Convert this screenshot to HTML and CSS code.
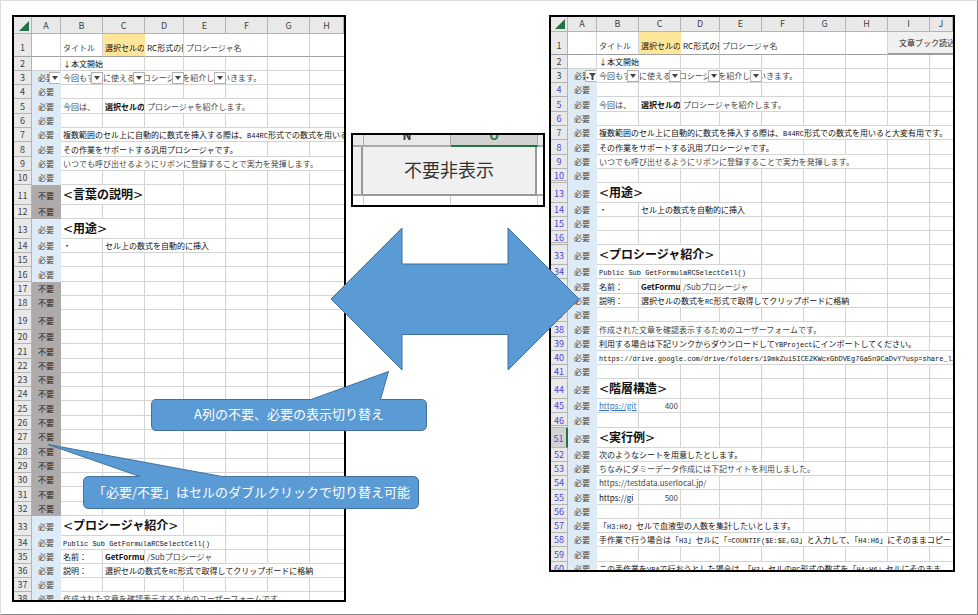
FILE: index.html
```html
<!DOCTYPE html>
<html lang="ja">
<head>
<meta charset="utf-8">
<title>不要非表示</title>
<link rel="stylesheet" href="styles.css">
</head>
<body>
<main class="slide">
  <section class="panel"><table class="sheet" id="sheet-all"></table></section>
  <section class="closeup">
    <div class="closeup-head"><span></span><span>N</span><span class="selected">O</span><span></span></div>
    <div class="closeup-body"><span class="stub"></span><button type="button">不要非表示</button><span></span></div>
    <div class="closeup-foot"><span></span><span></span><span></span><span></span></div>
  </section>
  <section class="panel"><table class="sheet filtered" id="sheet-filtered"></table></section>

  <svg class="shapes" width="978" height="615" viewBox="0 0 978 615" aria-hidden="true">
    <g fill="#5b9bd5" stroke="#41719c" stroke-width="1">
      <path d="M331 299 402 228V264H508V228L579 299 508 370V334.500H402V370Z"/>
      <path d="M156 399.500H311L388.500 371.500 380.500 399.500H421Q426.500 399.500 426.500 405V425Q426.500 430.500 421 430.500H156Q151.500 430.500 151.500 425V405Q151.500 399.500 156 399.500Z"/>
      <path d="M89 476.500H140L48 444.500 222 476.500H413Q418.500 476.500 418.500 482V503Q418.500 508.500 413 508.500H89Q83.500 508.500 83.500 503V482Q83.500 476.500 89 476.500Z"/>
    </g>
  </svg>
  <p class="callout callout-column">A列の不要、必要の表示切り替え</p>
  <p class="callout callout-toggle">「必要/不要」はセルのダブルクリックで切り替え可能</p>
</main>
<script src="sheets.js"></script>
</body>
</html>
```
FILE: styles.css
```css
* { box-sizing: border-box; }

body {
  margin: 0;
  background: #fff;
  font-family: "Noto Sans CJK JP", "Liberation Sans", sans-serif;
}

.slide {
  position: relative;
  display: grid;
  grid-template-columns: 334fr 195fr 406fr;
  column-gap: 4px;
  align-items: start;
  min-height: 100vh;
  padding: 14px 22px 12px 11px;
  border: 1px solid #ddd;
  border-right-color: #888;
  border-bottom: 2px solid #888;
}

.panel {
  min-width: 0;
  overflow: hidden;
  border: 2px solid #000;
}

/* Worksheet grid */
.sheet {
  width: 100%;
  table-layout: fixed;
  border-spacing: 0;
  font-size: 8px;
  line-height: 13px;
  color: #444;
}

.col-num { width: 18px; }
.filtered .col-num { width: 17px; }
.col-flag { width: 29px; }
.col-wide { width: 42px; }
.col-narrow { width: 39px; }

.sheet th,
.sheet td {
  padding: 0;
  border: 0 solid #d4d4d4;
  border-right-width: 1px;
  border-bottom-width: 1px;
  font-weight: 400;
  text-align: left;
  white-space: nowrap;
}

.sheet td:last-child { border-right-width: 0; }

.cell {
  height: 13px;
  padding-left: 2px;
  overflow: hidden;
}

.long .cell { height: 14px; padding-top: 1px; }
.tall .cell { height: 19px; padding-top: 4px; }
.title .cell { height: 22px; padding-top: 7px; }
.cut .cell { height: 8px; }
.cut td, .cut th { border-bottom-width: 0; }

.sheet th {
  background: #e9e9e9;
  border-color: #b4b4b4;
  font-size: 9px;
  text-align: center;
}

.sheet th .cell { padding-left: 0; }

.head .cell { height: 16px; line-height: 17px; }
.filtered .head .cell { height: 14px; line-height: 14px; }
.title th, .title td { border-bottom-color: #a0a0a0; }

.sheet .corner .cell { display: flex; justify-content: flex-end; align-items: flex-end; padding: 0 2px 2px 0; }
.corner svg { display: block; fill: #217346; }

.sheet .num-filtered { color: #4a48dc; }
.sheet .gap { border-bottom: 3px double #b4b4b4; }
.gap .cell { height: 11px; }
.long .gap .cell { height: 12px; }
.sheet .active { background: #d2d2d2; border-right: 2px solid #217346; }

.sheet .flag { text-align: center; }
.flag .cell { padding-left: 0; }
.sheet .on { background: #ddebf7; border-color: #ddebf7; }
.sheet .off { background: #aeaaaa; border-color: #aeaaaa; color: #222; }

.sheet .fill { background: #ffe699; border-right-color: #ffe699; }
.dark { color: #111; }
.sheet .bold { color: #111; font-weight: 700; }
.sheet .number { text-align: right; }
.number .cell { padding-right: 2px; }
.tall .heading .cell { padding-top: 0; line-height: 18px; font-size: 12px; font-weight: 700; color: #111; }
.heading span { font-family: "DejaVu Sans", sans-serif; font-weight: 400; }
.sheet code { font-family: "Liberation Mono", monospace; font-size: 7px; }
.sheet a { color: #2e75b6; }

/* Filter buttons lie over the text of their row */
.filter-row .cell { position: relative; }
.filters {
  position: absolute;
  inset: 0 auto 0 0;
  display: grid;
  grid-template-columns: 42px 42px 39px 42px;
  justify-items: end;
}
.flag .filters { grid-template-columns: 29px; }
.filters button {
  display: grid;
  place-items: center;
  width: 12px;
  height: 12px;
  margin: 1px 0 0;
  padding: 0;
  background: #fff;
  border: 1px solid #b0b0b0;
}
.filters svg { display: block; fill: #444; }

.title .command { vertical-align: top; }
.title .command .cell { padding: 0; }
.command button {
  width: 100%;
  height: 22px;
  padding: 0 0 0 11px;
  overflow: hidden;
  background: #f0f0f0;
  border: 0;
  border-bottom: 1px solid #999;
  color: #222;
  font: inherit;
  text-align: left;
  white-space: nowrap;
}

/* Enlarged toggle button */
.closeup {
  margin: 118px 0 0 1px;
  overflow: hidden;
  border: 2px solid #000;
}
.closeup > div { display: grid; grid-template-columns: 11px 88fr 88fr 5px; }
.closeup > .closeup-body { grid-template-columns: 10px 1fr 6px; }
.closeup-head span {
  height: 12px;
  overflow: hidden;
  background: #e9e9e9;
  border-right: 1px solid #aaa;
  border-bottom: 2px solid #aaa;
  color: #333;
  font-size: 12px;
  font-weight: 700;
  line-height: 0;
  text-align: center;
}
.closeup-head .selected { background: #d2d2d2; border-bottom-color: #217346; color: #217346; }
.closeup-body span { border-bottom: 2px solid #aaa; }
.closeup-body .stub { background: #f0f0f0; border-right: 2px solid #999; }
.closeup-body button {
  height: 49px;
  padding: 0 0 4px;
  background: #f0f0f0;
  border: 0;
  border-right: 2px solid #999;
  border-bottom: 2px solid #999;
  color: #333;
  font: inherit;
  font-size: 18px;
}
.closeup-foot span { height: 9px; border-right: 1px solid #ccc; }
.closeup span:last-child { border-right: 0; }

/* Drawn shapes and their captions, placed freely over the slide */
.shapes { position: absolute; top: -1px; left: -1px; pointer-events: none; }
.callout {
  position: absolute;
  margin: 0;
  color: #fff;
  font-size: 13px;
  line-height: 32px;
  text-align: center;
  white-space: nowrap;
}
.callout-column { top: 397px; left: 150px; width: 276px; }
.callout-toggle { top: 475px; left: 83px; width: 335px; }
```
FILE: sheets.js
```js
const heading = (text, span) => [`<span>&lt;</span>${text}<span>&gt;</span>`, span, "heading"];

const arrow = '<button type="button" aria-label="フィルター"><svg width="6" height="4"><path d="M0 0H6L3 4Z"/></svg></button>';
const funnel = '<button type="button" aria-label="フィルター適用中"><svg width="10" height="8"><path d="M3 1H10L7.500 4V8H5.500V4ZM0 5H3L1.500 7Z"/></svg></button>';
const filters = `<span class="filters">${arrow.repeat(4)}</span>`;

const title = [["タイトル"], ["選択セルの", 1, "fill dark"], ["RC形式の数", 1, "dark"], ["プロシージャ名", 2]];
const intro = [
  [2, "", "", [["↓本文開始", 2, "dark"]]],
  [3, "on", "filter-row", [["今回もすぐに使えるプロシージャを紹介していきます。" + filters, 5]]],
  [4, "on", "", []],
  [5, "on", "long", [["今回は、"], ["選択セルの", 1, "bold"], ["プロシージャを紹介します。", 3]]],
  [6, "on", "", []],
  [7, "on", "", [["複数範囲のセル上に自動的に数式を挿入する際は、<code>B44RC</code>形式での数式を用いると大変有用です。", 9, "dark"]]],
  [8, "on", "long", [["その作業をサポートする汎用プロシージャです。", 5, "dark"]]],
  [9, "on", "", [["いつでも呼び出せるようにリボンに登録することで実力を発揮します。", 7]]]
];
const usage = [["・", 1, "dark"], ["セル上の数式を自動的に挿入", 3, "dark"]];
const declaration = [["<code>Public Sub GetFormulaRCSelectCell()</code>", 4, "dark"]];
const procName = [["名前：", 1, "dark"], ["GetFormu", 1, "bold"], ["/Subプロシージャ", 2]];
const procNote = [["説明：", 1, "dark"], ["選択セルの数式を<code>RC</code>形式で取得してクリップボードに格納", 6, "dark"]];
const formNote = [["作成された文章を確認表示するためのユーザーフォームです。", 6]];

const hiddenRows = [];
for (let n = 17; n <= 32; n++) {
  const size = n === 19 ? "tall" : [21, 25, 28, 31].includes(n) ? "long" : "";
  hiddenRows.push([n, "off", size, []]);
}

const allRows = [
  [1, "", "title", title],
  ...intro,
  [10, "on", "", []],
  [11, "off", "tall", [heading("言葉の説明", 2)]],
  [12, "off", "", []],
  [13, "on", "tall", [heading("用途", 2)]],
  [14, "on", "", usage],
  [15, "on", "", []],
  [16, "on", "long", []],
  ...hiddenRows,
  [33, "on", "tall", [heading("プロシージャ紹介", 3)]],
  [34, "on", "", declaration],
  [35, "on", "", procName],
  [36, "on", "", procNote],
  [37, "on", "", []],
  [38, "on", "cut", formNote]
];

const filteredRows = [
  [1, "", "title", [...title, [""], [""], ['<button type="button">文章ブック読込</button>', 2, "command"]]],
  ...intro,
  [10, "on", "", [], "gap"],
  [13, "on", "tall", [heading("用途", 2)]],
  [14, "on", "", usage],
  [15, "on", "", []],
  [16, "on", "", [], "gap"],
  [33, "on", "tall", [heading("プロシージャ紹介", 3)]],
  [34, "on", "", declaration],
  [35, "on", "long", procName],
  [36, "on", "", procNote],
  [37, "on", "", []],
  [38, "on", "long", formNote],
  [39, "on", "", [["利用する場合は下記リンクからダウンロードして<code>YBProject</code>にインポートしてください。", 8, "dark"]]],
  [40, "on", "", [["<code>https://drive.google.com/drive/folders/19mkZui5ICE2KWcxGbDVEg7Ga5n9CaDvY?usp=share_link</code>", 9, "dark"]]],
  [41, "on", "", [], "gap"],
  [44, "on", "tall", [heading("階層構造", 2)]],
  [45, "on", "", [['<a href="#">https://git</a>'], ["400", 1, "number"]]],
  [46, "on", "long", [], "gap"],
  [51, "on", "tall", [heading("実行例", 2)], "active"],
  [52, "on", "", [["次のようなシートを用意したとします。", 4, "dark"]]],
  [53, "on", "", [["ちなみにダミーデータ作成には下記サイトを利用しました。", 6]]],
  [54, "on", "", [["https://testdata.userlocal.jp/", 3]]],
  [55, "on", "long", [["https://gi", 1, "dark"], ["500", 1, "number"]]],
  [56, "on", "", []],
  [57, "on", "", [["「<code>H3:H6</code>」セルで血液型の人数を集計したいとします。", 5, "dark"]]],
  [58, "on", "", [["手作業で行う場合は「<code>H3</code>」セルに「<code>=COUNTIF($E:$E,G3</code>」と入力して、「<code>H4:H6</code>」にそのままコピー", 9, "dark"]]],
  [59, "on", "long", []],
  [60, "on", "cut", [["この手作業を<code>VBA</code>で行おうとした場合は、「<code>H3</code>」セルの<code>RC</code>形式の数式を「<code>H4:H6</code>」セルにそのまま", 9, "dark"]]]
];

function cell(tag, html, cls = "", span = 1) {
  return `<${tag} class="${cls}" colspan="${span}"><div class="cell">${html}</div></${tag}>`;
}

function render(id, letters, rows, filtered) {
  const count = letters.length - 1;
  const cols = letters.map((c, i) =>
    `<col class="${i === 0 ? "col-flag" : i === count ? "" : c === "D" ? "col-narrow" : "col-wide"}">`);
  const corner = '<svg width="10" height="10"><path d="M10 0V10H0Z"/></svg>';
  let html = `<colgroup><col class="col-num">${cols.join("")}</colgroup>`;
  html += `<tr class="head">${cell("th", corner, "corner")}`;
  html += letters.map(c => cell("th", c)).join("") + "</tr>";

  for (const [num, flag, size, cells, mark = ""] of rows) {
    const numClass = `${mark} ${filtered && num > 3 ? "num-filtered" : ""}`;
    const label = { on: "必要", off: "不要" }[flag] || "";
    const flagFilter = num === 3 ? `<span class="filters">${filtered ? funnel : arrow}</span>` : "";
    html += `<tr class="${size}">${cell("th", num, numClass)}${cell("td", label + flagFilter, `flag ${flag}`)}`;
    let used = 0;
    for (const [text, span = 1, cls = ""] of cells) {
      const width = Math.min(span, count - used);
      html += cell("td", text, cls, width);
      used += width;
    }
    html += cell("td", "").repeat(count - used) + "</tr>";
  }
  document.getElementById(id).innerHTML = html;
}

render("sheet-all", [..."ABCDEFGH"], allRows, false);
render("sheet-filtered", [..."ABCDEFGHIJ"], filteredRows, true);
```
